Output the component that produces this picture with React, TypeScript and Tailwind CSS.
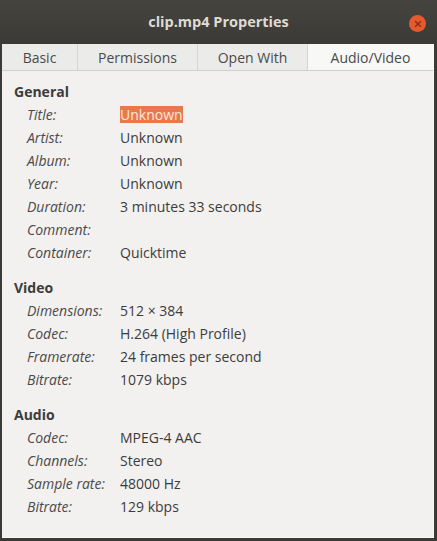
import { X } from 'lucide-react'

interface Row {
  label: string
  value: string
  selected?: boolean
}

interface Section {
  title: string
  rows: Row[]
}

const SECTIONS: Section[] = [
  {
    title: 'General',
    rows: [
      { label: 'Title:', value: 'Unknown', selected: true },
      { label: 'Artist:', value: 'Unknown' },
      { label: 'Album:', value: 'Unknown' },
      { label: 'Year:', value: 'Unknown' },
      { label: 'Duration:', value: '3 minutes 33 seconds' },
      { label: 'Comment:', value: '' },
      { label: 'Container:', value: 'Quicktime' },
    ],
  },
  {
    title: 'Video',
    rows: [
      { label: 'Dimensions:', value: '512 × 384' },
      { label: 'Codec:', value: 'H.264 (High Profile)' },
      { label: 'Framerate:', value: '24 frames per second' },
      { label: 'Bitrate:', value: '1079 kbps' },
    ],
  },
  {
    title: 'Audio',
    rows: [
      { label: 'Codec:', value: 'MPEG-4 AAC' },
      { label: 'Channels:', value: 'Stereo' },
      { label: 'Sample rate:', value: '48000 Hz' },
      { label: 'Bitrate:', value: '129 kbps' },
    ],
  },
]

const TABS = [
  { label: 'Basic', w: 'w-[75px]' },
  { label: 'Permissions', w: 'w-[120px]' },
  { label: 'Open With', w: 'w-[110px]' },
  { label: 'Audio/Video', w: 'flex-1', active: true },
]

export default function App() {
  return (
    <div className="w-[437px] h-[541px] bg-[#3b3a36] flex flex-col font-['Open_Sans',sans-serif]">
      {/* title bar */}
      <div className="h-[44px] shrink-0 flex items-center justify-center relative bg-gradient-to-b from-[#45443f] to-[#3b3a36]">
        <span className="text-[14.5px] font-bold text-[#dfdbd2]">clip.mp4 Properties</span>
        <div className="absolute right-[11px] top-[15px] w-[17px] h-[17px] rounded-full bg-[#e5592f] flex items-center justify-center">
          <X className="w-[10px] h-[10px] text-[#8a2a10]" strokeWidth={3} />
        </div>
      </div>

      <div className="flex-1 flex flex-col ml-[2px] mr-[3px] mb-[3px] bg-[#f2f1f0] border-r border-b border-[#fbfbfa]">
        {/* tabs */}
        <div className="h-[27px] shrink-0 flex border-b border-[#cfcecc]">
          {TABS.map((t, i) => (
            <div
              key={t.label}
              className={`${t.w} flex items-center justify-center text-[14px] text-[#4a4a4a] ${
                t.active ? 'bg-[#f8f8f7]' : 'bg-[#ebebea]'
              } ${i > 0 ? 'border-l border-[#d6d5d3]' : ''}`}
            >
              {t.label}
            </div>
          ))}
        </div>

        {/* content */}
        <div className="pt-[9px] pl-[12px] flex flex-col gap-[12px]">
          {SECTIONS.map(s => (
            <div key={s.title} className="flex flex-col">
              <div className="h-[23px] flex items-center text-[14px] font-bold text-[#3c3c3c]">{s.title}</div>
              {s.rows.map(r => (
                <div key={s.title + r.label} className="h-[23px] flex items-center text-[14px] text-[#3c3c3c]">
                  <span className="w-[93px] pl-[13px] box-content italic text-[#4a4a4a]">{r.label}</span>
                  <span className={r.selected ? 'bg-[#e9784e] text-[#fbe9df] leading-[17px]' : ''}>
                    {r.value}
                  </span>
                </div>
              ))}
            </div>
          ))}
        </div>
      </div>
    </div>
  )
}
